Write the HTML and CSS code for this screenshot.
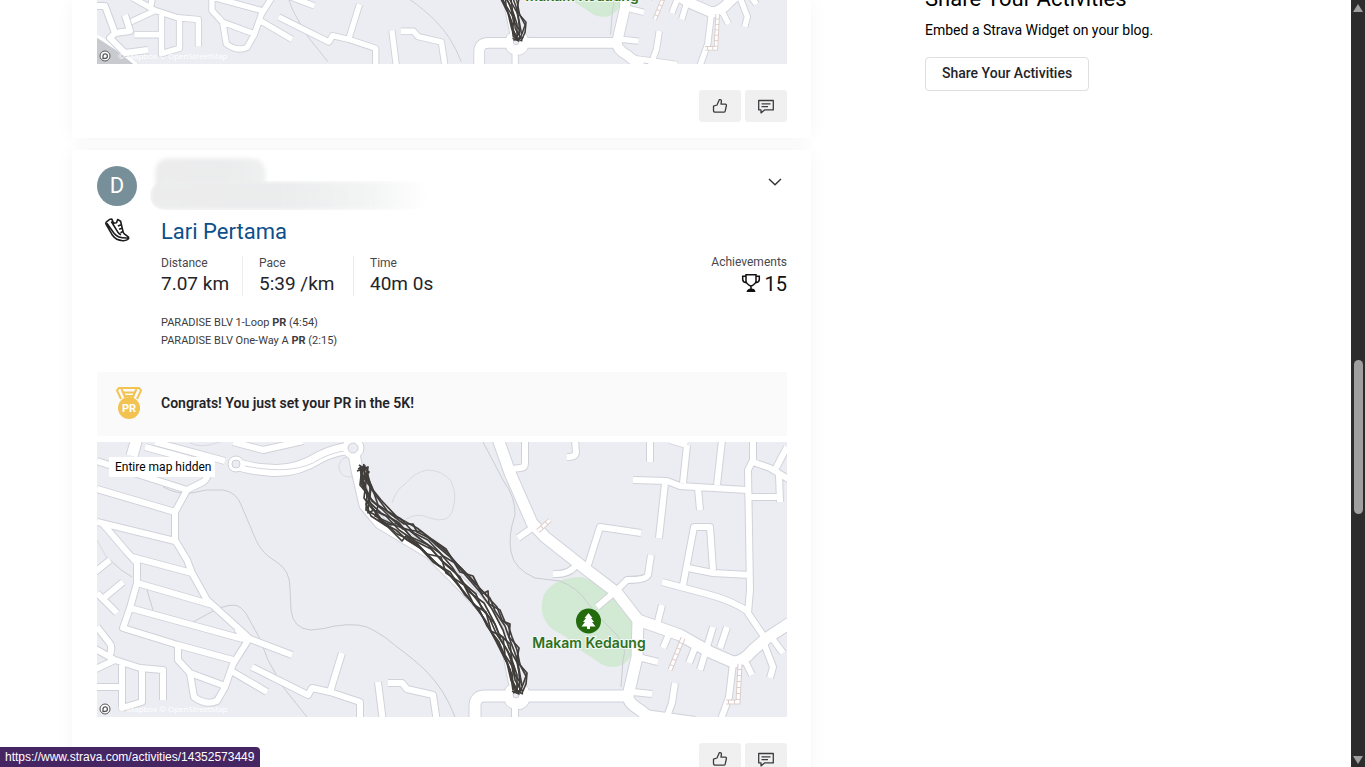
FILE: index.html
```html
<!DOCTYPE html>
<html lang="en">
<head>
<meta charset="utf-8">
<title>Strava Dashboard</title>
<link rel="stylesheet" href="styles.css">
</head>
<body>
<svg class="defs" aria-hidden="true">
  <defs>
    <symbol id="icon-like" viewBox="0 0 16 16"><path d="M1.500 8.200 5 7l2.400-5.400h.8c.9 0 1.300.7 1.200 1.500L9 6.200h4.400c.8 0 1.200.5 1 1.300l-1.200 5.600c-.2.7-.7 1.100-1.400 1.100H3.200c-1 0-1.700-.7-1.700-1.600z"/></symbol>
    <symbol id="icon-comment" viewBox="0 0 18 16"><path d="M1.700 2.500h14.600v9.400H7.500L4 14.900v-3H1.700zM4.500 5.800h9M4.500 8.700h6.500"/></symbol>
    <path id="green" d="M543 597C546 590 551 585 557 582Q568 577 582 577L602 584 635 618 632 653C628 662 622 667 613 667Q604 667 597 661L580 650 566 637 552 629Q544 622 542 612Q541 604 543 597Z"/>
    <g id="trails">
      <path d="M163 487Q178 495 192 493L206 490H223Q237 492 242 507L253 533Q259 549 268 556L278 563Q290 571 290 588L291 610Q293 629 311 630Q325 629 335 626Q361 622 373 630Q385 636 397 647Q415 660 426 671Q445 690 455 717"/>
      <path d="M193 622L215 610Q231 603 238 606Q245 610 249 619L260 639 268 660 283 687 307 717M110 560Q121 571 132 577M147 590L153 610"/>
      <path d="M483 442L503 480Q516 498 515 515Q508 535 511 552Q514 569 535 578L560 581Q578 588 587 602L597 615 612 630Q629 645 623 660L621 687"/>
      <path class="faint" d="M392 503Q396 490 404 485Q415 472 427 470Q442 470 451 481Q458 495 452 512Q447 524 430 518Q418 512 406 519M356 474A10 10 0 1 1 350 457M97 540L108 560M220 442Q200 449 190 443"/>
    </g>
    <g id="minor">
      <path d="M97 461L187 490 203 482Q209 478 208 468M187 490L175 512V540L187 560 192 573 207 600 250 639 292 655M97 489L175 512M97 522L175 541M103 524L127 552 137 563V583L130 608 123 628 178 645 233 660M132 557L192 573M137 583L213 605M130 608L243 639M237 629L247 642 233 664 225 687 217 701Q206 706 194 697L190 673 178 660V647M190 673L225 686M233 672L267 692"/>
      <path d="M80 584L110 560M97 593L117 613M105 597L123 582M97 627L108 641Q114 647 109 657M90 646L115 660 140 668 163 670V700M85 674L115 660M122 665V708L142 702V668M92 687H120M252 667L308 695 312 688 330 692 360 702V720M342 653L330 692M378 682L383 722M388 683H402L407 689 433 695 437 722"/>
      <path d="M155 442L225 461M145 447L215 466M233 442L263 450 303 441M525 440V463Q525 468 520 468L512 469M575 440L576 452Q576 457 567 457M650 440V462M633 480L667 481 680 486 747 490M687 445L683 483M670 440L687 445M722 440L717 485M665 483L659 538M698 488L700 510"/>
      <path d="M753 440V460L748 470 750 590 748 613 765 638M753 462L770 468 790 480M775 470L787 447M779 475L780 502M750 497H779M588 565L600 527 641 533M553 574Q570 575 577 564M683 585L694 527H710L713 570M688 568L713 573 750 575M662 582L707 594Q733 601 747 611M651 555L648 575Q646 580 627 580L617 590 597 607"/>
      <path d="M515 700V722M638 657L658 662M633 692L652 694M675 683L672 703 665 722M645 713L695 720M662 605L657 625M669 634L663 648M713 627L706 650 700 670M727 627L720 648M696 645L689 663M746 663L752 675M763 641L773 667 770 678M772 638L783 653M733 663L729 697 720 722M532 528L518 538"/>
    </g>
    <g id="major">
      <path d="M497 436L510 473 532 523 545 537 583 567 617 593 638 620 680 635 710 652 733 662Q743 662 753 650L767 638 793 621M638 620L637 657 628 696Q628 703 640 710L655 722M475 722V706Q475 696 485 696H628"/>
      <path d="M137 438L132 456M236 464Q250 469 268 470 Q295 473 320 457Q336 449 353 448L357 470 365 505 380 523 400 535 430 553 460 583 490 615 508 650 517 696"/>
    </g>
    <g id="steps"><path d="M740 664L738 702H726M683 638L670 670M538 531L550 520"/></g>
    <g id="track">
      <path d="M360 467L362 480 367 495 366 510 377 516 383 523 396 530 407 540 420 548 433 562 445 570 458 584 470 600 481 614 490 630 502 650 510 670 513 690"/>
      <path d="M367 470L368 481 373 490 381 500 397 517 417 528 430 538 447 552 457 564 470 577 483 592 497 607 502 620 508 625 512 637 517 650 520 665 527 673 526 684 522 693"/>
      <path d="M358 469L365 466 364 478 371 488 369 502 381 513 398 522 411 537 428 545 441 560 454 571 466 586 477 600 489 617 496 633 507 650 514 667 515 680 521 690 513 693"/>
      <path d="M359 465L369 472 361 483 369 497 378 506 375 516 394 525 409 530 424 542 440 553 452 567 461 581 476 594 482 609 495 624 501 640 510 655 513 672 520 682 515 692 524 690"/>
      <path d="M364 464L362 475 366 489 372 501 382 509 392 519 403 529 422 532 435 544 449 556 463 570 475 584 490 598 495 611 505 626 510 640 516 656 519 672 520 692"/>
      <path d="M357 471L368 467 366 482 364 498 373 510 386 516 399 530 415 541 431 549 444 563 460 577 468 591 484 603 494 622 499 634 510 644 512 660 517 675 517 693"/>
      <path d="M361 473L370 483 370 498 366 504 371 516 388 527 402 541 406 536 421 548 438 565 450 572 465 595 479 609 487 626 499 642 506 659 512 675 514 690 523 694"/>
      <path d="M367 472L372 490 388 512 404 524 413 524 417 532 433 540 446 549 460 572 473 576 482 594 488 591 489 604 500 610 505 622 510 624 509 637 519 648 517 659 526 676 521 690"/>
      <path d="M362 467L360 485 369 496 368 513 374 510 380 521 391 525 399 523 412 538 427 554 441 557 446 573 464 585 474 605 486 612 491 631 503 637 505 655 514 669 512 680 519 694 512 691"/>
      <path d="M363 469L372 487 378 505 387 511 401 519 414 533 428 540 443 556 455 563 467 577 480 592 492 609 503 630 509 648 518 664 522 686"/>
      <path d="M361 476L365 490 372 507 382 520 397 534 408 539 424 551 436 563 448 573 462 590 473 603 485 620 496 641 507 663 511 680 516 690"/>
    </g>
    <g id="basemap">
      <use href="#green" class="park"/>
      <use href="#trails" class="trail"/>
      <circle class="ring-edge" cx="517" cy="696" r="14"/>
      <use href="#minor" class="minor-edge"/><use href="#major" class="major-edge"/>
      <circle class="ring-edge" cx="236" cy="464" r="8"/><circle class="ring-edge" cx="353" cy="448" r="11"/>
      <use href="#minor" class="minor-fill"/><use href="#major" class="major-fill"/>
      <path class="median" d="M245 466Q295 476 320 459Q334 452 345 451"/>
      <circle class="ring" cx="236" cy="464" r="7"/><circle class="island" cx="236" cy="464" r="4"/>
      <circle class="ring" cx="353" cy="448" r="10"/><circle class="island" cx="353" cy="448" r="5"/>
      <circle class="ring" cx="517" cy="696" r="13"/><circle class="island" cx="516" cy="695" r="3"/>
      <use href="#steps" class="steps-edge"/><use href="#steps" class="steps-fill"/>
      <use href="#track" class="track"/>
    </g>
    <g id="mapbox">
      <circle cx="105" cy="709" r="5" fill="#fff" stroke="#55555a" stroke-width="1"/>
      <path d="M103 711.500V709A2.200 2.200 0 1 1 105.500 711.300Z" fill="none" stroke="#55555a" stroke-width="1.300"/>
      <text class="credit" x="118" y="712">© Mapbox © OpenStreetMap</text>
    </g>
  </defs>
</svg>

<div class="window">
  <div class="page">
    <main class="feed">
      <article class="card">
        <svg class="map" viewBox="97 0 690 64" role="img" aria-label="Activity map">
          <rect class="land" x="97" y="0" width="690" height="64"/>
          <g transform="translate(517 42) scale(.9) translate(-517 -695)"><use href="#basemap"/></g>
          <path class="water" d="M97 37L114 49 139 64H97Z"/>
          <path class="bank" d="M97 36L116 48 137 65"/>
          <path class="minor-edge" d="M95 6H105L115 33 130 31 125 15M115 33L110 38 125 53 148 50"/>
          <path class="minor-fill" d="M95 6H105L115 33 130 31 125 15M115 33L110 38 125 53 148 50"/>
          <text class="place" x="582" y="1">Makam Kedaung</text>
          <use href="#mapbox" transform="translate(0 -653)"/>
        </svg>
        <div class="actions">
          <button class="act" aria-label="Give kudos"><svg class="ico-like"><use href="#icon-like"/></svg></button>
          <button class="act" aria-label="Comment"><svg class="ico-comment"><use href="#icon-comment"/></svg></button>
        </div>
      </article>

      <article class="card">
        <header class="head">
          <div class="avatar">D</div>
          <div class="who"><div class="smudge smudge-name"></div><div class="smudge smudge-date"></div></div>
          <button class="toggle" aria-label="More"><svg width="14" height="8" viewBox="0 0 14 8"><path d="M1 1l6 5.800L13 1"/></svg></button>
        </header>
        <div class="body">
          <svg class="shoe" viewBox="0 0 26 26"><path d="M5.500 2.500 2.200 5.200c-.6.6-.6 1.300-.2 2L8.500 18.300c2.400 3.500 6.300 5.200 10.300 5.400 2.400.1 4.600-.4 5.600-1.800.5-.6.2-1.700-.4-2.200l-3.400-2.500c-1-.7-1.300-1.600-1.600-2.800L16.600 4.200l-2.900-1.700-1.200 3.300-3 .3L7.800 2zM2.800 6.200l7.400 10.300c2.300 3 6.500 4.800 13.600 4.500M7.300 4.500l7 11.300c.8 1 1.700 1.700 2.800 2M17.200 7.800l-3.300 1.100M18 11.200l-2.900 1M18.900 14.500l-2.400 1.200"/></svg>
          <div class="detail">
            <h3 class="title"><a href="#">Lari Pertama</a></h3>
            <div class="row">
              <ul class="stats">
                <li><span class="label">Distance</span><span class="value">7.07 km</span></li>
                <li><span class="label">Pace</span><span class="value">5:39 /km</span></li>
                <li><span class="label">Time</span><span class="value">40m 0s</span></li>
              </ul>
              <div class="achieve"><span class="label">Achievements</span>
                <span class="count"><svg width="20" height="20" viewBox="0 0 20 20"><path d="M5 .8h10v6.300c0 2.700-2.500 4-5 5.200-2.500-1.200-5-2.500-5-5.200zM5 2.300H1.700v3.200c0 1.900 1.500 2.900 3.600 3.300M15 2.300h3.300v3.200c0 1.900-1.500 2.900-3.600 3.300M10 12.300v3"/><path class="base" d="M5.500 18Q6 14.800 10 14.600T14.500 18Z"/></svg>15</span>
              </div>
            </div>
            <ul class="segments">
              <li>PARADISE BLV 1-Loop <b>PR</b> (4:54)</li>
              <li>PARADISE BLV One-Way A <b>PR</b> (2:15)</li>
            </ul>
          </div>
        </div>
        <div class="banner">
          <svg class="medal" viewBox="0 0 28 34"><path class="ribbon" d="M6 13 2 4.500 4 2H24L26 4.500 22 13M6.500 3l4 9M21.500 3l-4 9M8 6.500H20M10 10H18"/><circle cx="14" cy="22" r="11"/><text x="14" y="26">PR</text></svg>
          <p>Congrats! You just set your PR in the 5K!</p>
        </div>
        <div class="map-wrap">
          <svg class="map" viewBox="97 442 690 275" role="img" aria-label="Activity map">
            <rect class="land" x="97" y="442" width="690" height="275"/>
            <use href="#basemap"/>
            <circle cx="588.500" cy="621" r="12.500" fill="#246b0e"/>
            <path d="M588.500 613l-4 5h1.500l-3 4h2l-3.500 4.500h5.500v2.500h3v-2.500h5.500l-3.500-4.500h2l-3-4h1.500z" fill="#fff"/>
            <text class="place" x="589" y="648">Makam Kedaung</text>
            <use href="#mapbox"/>
          </svg>
          <span class="hidden-tag">Entire map hidden</span>
        </div>
        <div class="actions">
          <button class="act" aria-label="Give kudos"><svg class="ico-like"><use href="#icon-like"/></svg></button>
          <button class="act" aria-label="Comment"><svg class="ico-comment"><use href="#icon-comment"/></svg></button>
        </div>
      </article>
    </main>
    <aside class="side">
      <h2>Share Your Activities</h2>
      <p>Embed a Strava Widget on your blog.</p>
      <button class="share">Share Your Activities</button>
    </aside>
  </div>
  <div class="scrollbar"><i class="up"></i><i class="thumb"></i><i class="down"></i></div>
</div>
<div class="status">https://www.strava.com/activities/14352573449</div>
</body>
</html>
```
FILE: styles.css
```css
* { box-sizing: border-box; }
body { margin: 0; background: #fff; color: #242428; font-family: Roboto, "Liberation Sans", sans-serif; }
h2, h3, p, ul { margin: 0; padding: 0; font-weight: 400; }
ul { list-style: none; }
button { font: inherit; color: inherit; border: 0; padding: 0; background: none; }
.defs { position: absolute; width: 0; height: 0; }

.window { display: flex; height: 100vh; overflow: hidden; }
.page { flex: 1; display: flex; gap: 114px; padding-left: 72px; min-width: 0; }
.feed { flex: 0 1 739px; display: flex; flex-direction: column; gap: 12px; }
.card { flex: none; padding: 0 24px 16px 25px; background: #fff; border-radius: 4px; box-shadow: 0 0 18px rgba(0, 0, 0, .045); position: relative; }

/* map */
.map { display: block; width: 100%; height: auto; overflow: hidden; }
.map-wrap { position: relative; margin-top: 6px; }
.land { fill: #ecedf3; }
.water { fill: #c9cacf; }
.bank { fill: none; stroke: #fff; stroke-width: 3; }
.park { fill: #d2ead4; }
.trail { fill: none; stroke: #cbccd2; stroke-width: 1; }
.faint { stroke: #d9dae0; }
.minor-edge, .minor-fill, .major-edge, .major-fill { fill: none; stroke-linejoin: round; }
.minor-edge { stroke: #d0d2d9; stroke-width: 8; }
.minor-fill { stroke: #fff; stroke-width: 6; }
.major-edge { stroke: #d0d2d9; stroke-width: 13; }
.major-fill { stroke: #fff; stroke-width: 11; }
.ring, .ring-edge { fill: #fff; }
.ring-edge { stroke: #d0d2d9; stroke-width: 1; }
.island { fill: #ecedf3; stroke: #cfd0d7; stroke-width: 1; }
.median { fill: none; stroke: #d6d7de; }
.steps-edge { fill: none; stroke: #dccdca; stroke-width: 5; }
.steps-fill { fill: none; stroke: #fff; stroke-width: 3; stroke-dasharray: 5 1; }
.track { fill: none; stroke: #403d3b; stroke-width: 1.7; stroke-linejoin: round; }
.place { font: 600 14px Inter, sans-serif; fill: #2f701e; text-anchor: middle; stroke: #f4f8f4; stroke-width: 2; paint-order: stroke; }
.credit { font: 8px "Open Sans", sans-serif; fill: #fff; }
.hidden-tag { position: absolute; left: 12px; top: 15px; padding: 0 4px 0 6px; background: #fff; color: #000; font-size: 12px; line-height: 20px; }

.actions { display: flex; justify-content: flex-end; gap: 4px; padding-top: 26px; }
.act { display: flex; align-items: center; justify-content: center; width: 42px; height: 32px; background: #f0f0f0; border-radius: 3px; }
.act svg { fill: none; stroke: #3c3c40; stroke-width: 1.3; stroke-linejoin: round; }
.ico-like { width: 16px; height: 16px; }
.ico-comment { width: 18px; height: 16px; }

/* activity */
.head { display: flex; padding-top: 16px; }
.avatar { width: 40px; height: 40px; border-radius: 50%; background: #768f99; color: #fff; font-size: 22px; line-height: 40px; text-align: center; }
.who { flex: 1; position: relative; }
.smudge { position: absolute; border-radius: 14px; filter: blur(2px);
  background: repeating-linear-gradient(90deg, rgba(255,255,255,.5) 0 2px, transparent 2px 5px), repeating-linear-gradient(rgba(255,255,255,.5) 0 2px, transparent 2px 5px), linear-gradient(90deg, #e2e2e2, #dfe1e2 60%, #e6e7e7); }
.smudge-name { left: 18px; top: -8px; width: 110px; height: 36px; }
.smudge-date { left: 13px; top: 15px; width: 280px; height: 29px; -webkit-mask: linear-gradient(90deg, #000 45%, rgba(0,0,0,.6) 80%, transparent); mask: linear-gradient(90deg, #000 45%, rgba(0,0,0,.6) 80%, transparent); }
.toggle { width: 24px; height: 28px; }
.toggle svg { fill: none; stroke: #333; stroke-width: 1.4; }
.body { display: grid; grid-template-columns: 40px 1fr; column-gap: 24px; padding-top: 10px; }
.shoe { width: 26px; height: 26px; margin: 1px 0 0 7px; fill: none; stroke: #1c1c1e; stroke-width: 1.6; stroke-linejoin: round; }
.title { font-size: 22px; line-height: 32px; }
.title a { color: #0d4f8b; text-decoration: none; }
.row { display: flex; justify-content: space-between; padding-top: 5px; }
.stats { display: grid; grid-template-columns: 81px 111px auto; margin-top: 3px; }
.stats li { padding-left: 16px; border-left: 1px solid #ececef; height: 40px; white-space: nowrap; }
.stats li:first-child { padding-left: 0; border: 0; }
.label { display: block; font-size: 12px; line-height: 14px; color: #48484c; }
.value { display: block; font-size: 19px; line-height: 28px; }
.achieve { text-align: right; color: #111; padding-top: 2px; }
.count { display: flex; justify-content: flex-end; align-items: center; gap: 4px; font-size: 20px; line-height: 30px; }
.count svg { fill: none; stroke: #111; stroke-width: 1.5; }
.count .base { fill: #111; stroke: none; }
.segments { padding-top: 15px; font-size: 11px; line-height: 18px; color: #3c3c40; }
.banner { display: flex; align-items: center; gap: 18px; height: 64px; margin-top: 22px; padding: 0 0 2px 18px; background: #fafafa; font-size: 14px; }
.banner p { font-weight: 600; }
.medal { width: 28px; height: 34px; }
.medal circle { fill: #f2c351; }
.medal .ribbon { fill: none; stroke: #f2c351; stroke-width: 2; }
.medal text { font: 700 11px Roboto, sans-serif; fill: #fff; text-anchor: middle; }

/* sidebar */
.side { flex: 1; min-width: 0; color: #000; }
.side h2 { font-size: 22px; line-height: 26px; margin-top: -14px; }
.side p { font-size: 14px; line-height: 20px; padding: 8px 0 17px; }
.share { display: block; height: 34px; padding: 0 16px 2px; border: 1px solid #dfdfe3; border-radius: 4px; font-size: 14px; font-weight: 500; color: #242428; }

/* browser chrome */
.scrollbar { width: 14px; background: #2c2c2c; display: flex; flex-direction: column; align-items: center; padding: 4px 0 3px; }
.up, .down { border: 5px solid transparent; }
.up { border-top: 0; border-bottom: 8px solid #9f9f9f; }
.down { border-bottom: 0; border-top: 8px solid #9f9f9f; margin-top: auto; }
.thumb { width: 9px; height: 154px; margin-top: 348px; border-radius: 5px; background: #9f9f9f; }
.status { position: fixed; left: 0; bottom: 0; padding: 0 6px 0 5px; height: 20px; border-radius: 0 4px 0 0; background: #452562; color: #fff; font: 12px/20px "Liberation Sans", sans-serif; }
```
